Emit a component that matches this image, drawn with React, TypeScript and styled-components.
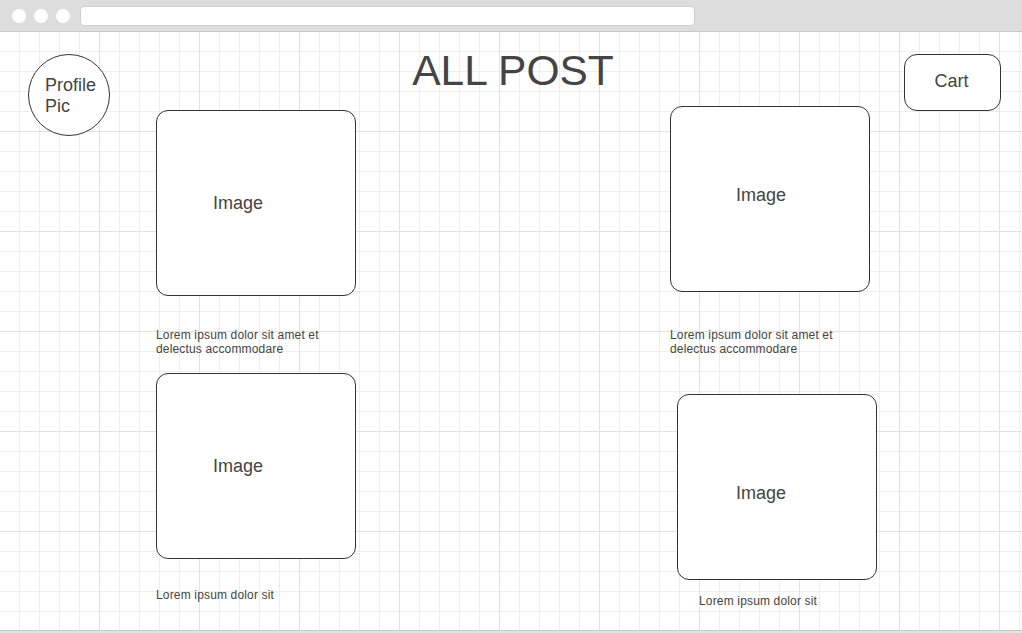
import React from "react";
import styled, { createGlobalStyle } from "styled-components";

const GlobalStyle = createGlobalStyle`
  html, body { margin: 0; padding: 0; background: #ffffff; }
  body { font-family: "Liberation Sans", Arial, Helvetica, sans-serif; color: #444444; overflow: hidden; }
  * { box-sizing: border-box; }
`;

const Window = styled.div`
  width: 1022px;
  height: 633px;
  display: flex;
  flex-direction: column;
  overflow: hidden;
`;

const TitleBar = styled.div`
  height: 32px;
  flex: none;
  display: flex;
  align-items: center;
  padding-left: 12px;
  gap: 8px;
  background: #dddddd;
  border-bottom: 1px solid #c8c8c8;
`;

const Dot = styled.span`
  width: 14px;
  height: 14px;
  border-radius: 50%;
  background: #ffffff;
`;

const AddressBar = styled.div`
  width: 615px;
  height: 20px;
  margin-left: 2px;
  border-radius: 4px;
  background: #ffffff;
  border: 1px solid #cfcfcf;
`;

const Canvas = styled.main`
  flex: 1;
  display: flex;
  align-items: flex-start;
  padding: 0 21px 0 28px;
  background-color: #ffffff;
  background-image:
    linear-gradient(to right, #e2e2e2 1px, transparent 1px),
    linear-gradient(to bottom, #e2e2e2 1px, transparent 1px),
    linear-gradient(to right, #eeeeee 1px, transparent 1px),
    linear-gradient(to bottom, #eeeeee 1px, transparent 1px);
  background-size: 100px 100px, 100px 100px, 20px 20px, 20px 20px;
  background-position: 99px 99px, 99px 99px, 19px 19px, 19px 19px;
`;

const BottomBar = styled.div`
  height: 3px;
  flex: none;
  background: #e4e4e4;
  border-top: 1px solid #c8c8c8;
`;

const ProfilePic = styled.div`
  flex: none;
  width: 82px;
  height: 82px;
  margin-top: 22px;
  border-radius: 50%;
  border: 1px solid #333333;
  background: #ffffff;
  display: flex;
  flex-direction: column;
  justify-content: center;
  padding: 2px 0 0 16px;
  font-size: 18px;
  line-height: 21px;
  color: #444444;
`;

const Column = styled.section<{ $top: number; $ml: number; $width: number }>`
  flex: none;
  width: ${(p) => p.$width}px;
  margin-top: ${(p) => p.$top}px;
  margin-left: ${(p) => p.$ml}px;
  display: flex;
  flex-direction: column;
  align-items: flex-start;
`;

const Title = styled.h1`
  flex: 1;
  margin: 15px 0 0;
  text-align: center;
  font-size: 42.5px;
  line-height: 48px;
  font-weight: 400;
  color: #444444;
  white-space: nowrap;
`;

const Card = styled.div<{ $padLeft: number; $dy: number; $mt: number; $ml: number }>`
  width: 200px;
  height: 186px;
  margin-top: ${(p) => p.$mt}px;
  margin-left: ${(p) => p.$ml}px;
  border: 1px solid #333333;
  border-radius: 12px;
  background: #ffffff;
  display: flex;
  align-items: center;
  padding: ${(p) => (p.$dy > 0 ? p.$dy * 2 : 0)}px 0 ${(p) => (p.$dy < 0 ? -p.$dy * 2 : 0)}px ${(p) => p.$padLeft}px;
  font-size: 18px;
  color: #444444;
`;

const Caption = styled.p<{ $mt: number; $ml: number }>`
  margin: ${(p) => p.$mt}px 0 0 ${(p) => p.$ml}px;
  width: 200px;
  font-size: 12px;
  line-height: 14px;
  letter-spacing: 0.16px;
  color: #444444;
`;

const CartButton = styled.button`
  flex: none;
  width: 97px;
  height: 57px;
  margin-top: 22px;
  margin-left: 27px;
  border: 1px solid #333333;
  border-radius: 13px;
  background: #ffffff;
  display: flex;
  align-items: center;
  justify-content: center;
  padding: 0 2px 3px 0;
  font-family: "Liberation Sans", Arial, Helvetica, sans-serif;
  font-size: 18px;
  color: #444444;
`;

export default function App() {
  return (
    <>
      <GlobalStyle />
      <Window>
        <TitleBar>
          <Dot />
          <Dot />
          <Dot />
          <AddressBar />
        </TitleBar>
        <Canvas>
          <ProfilePic>
            <span>Profile</span>
            <span>Pic</span>
          </ProfilePic>
          <Column $top={78} $ml={46} $width={200}>
            <Card $padLeft={56} $dy={0} $mt={0} $ml={0}>Image</Card>
            <Caption $mt={32} $ml={0}>Lorem ipsum dolor sit amet et delectus accommodare</Caption>
            <Card $padLeft={56} $dy={0} $mt={17} $ml={0}>Image</Card>
            <Caption $mt={29} $ml={0}>Lorem ipsum dolor sit</Caption>
          </Column>
          <Title>ALL POST</Title>
          <Column $top={74} $ml={0} $width={207}>
            <Card $padLeft={65} $dy={-4} $mt={0} $ml={0}>Image</Card>
            <Caption $mt={36} $ml={0}>Lorem ipsum dolor sit amet et delectus accommodare</Caption>
            <Card $padLeft={58} $dy={6} $mt={38} $ml={7}>Image</Card>
            <Caption $mt={14} $ml={29}>Lorem ipsum dolor sit</Caption>
          </Column>
          <CartButton>Cart</CartButton>
        </Canvas>
        <BottomBar />
      </Window>
    </>
  );
}
